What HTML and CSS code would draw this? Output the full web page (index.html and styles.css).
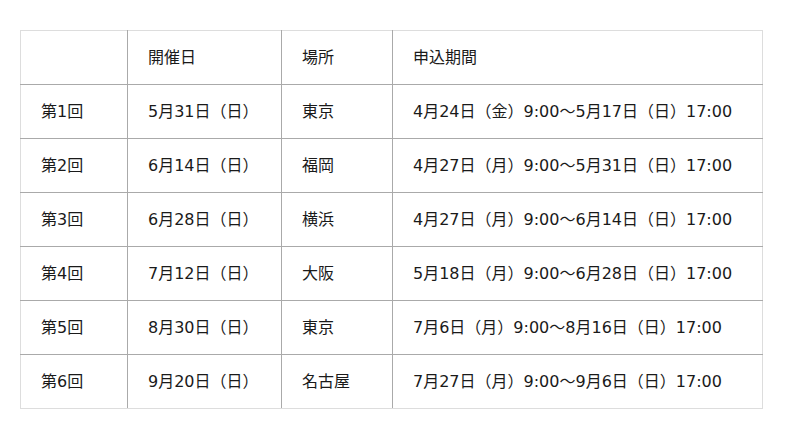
FILE: index.html
```html
<!DOCTYPE html>
<html lang="ja">
<head>
<meta charset="utf-8">
<link rel="stylesheet" href="styles.css">
</head>
<body>
<div class="wrap">
<table class="schedule">
  <colgroup>
    <col class="c1"><col class="c2"><col class="c3"><col class="c4">
  </colgroup>
  <tr><td></td><td>開催日</td><td>場所</td><td>申込期間</td></tr>
  <tr><td>第1回</td><td>5月31日（日）</td><td>東京</td><td>4月24日（金）9:00〜5月17日（日）17:00</td></tr>
  <tr><td>第2回</td><td>6月14日（日）</td><td>福岡</td><td>4月27日（月）9:00〜5月31日（日）17:00</td></tr>
  <tr><td>第3回</td><td>6月28日（日）</td><td>横浜</td><td>4月27日（月）9:00〜6月14日（日）17:00</td></tr>
  <tr><td>第4回</td><td>7月12日（日）</td><td>大阪</td><td>5月18日（月）9:00〜6月28日（日）17:00</td></tr>
  <tr><td>第5回</td><td>8月30日（日）</td><td>東京</td><td>7月6日（月）9:00〜8月16日（日）17:00</td></tr>
  <tr><td>第6回</td><td>9月20日（日）</td><td>名古屋</td><td>7月27日（月）9:00〜9月6日（日）17:00</td></tr>
</table>
</div>
</body>
</html>
```
FILE: styles.css
```css
html, body {
  margin: 0;
  padding: 0;
  background: #fff;
}
.wrap {
  padding: 30px 20px;
}
.schedule {
  width: 742px;
  border-collapse: collapse;
  table-layout: fixed;
  font-family: "DejaVu Sans", "Noto Sans CJK JP", sans-serif;
  font-size: 16px;
  color: #1a1a1a;
}
.c1 { width: 107px; }
.c2 { width: 154px; }
.c3 { width: 111px; }
.c4 { width: 370px; }
.schedule td {
  border: 1px solid #aaa;
  padding: 15px 20px;
  line-height: 23px;
  white-space: nowrap;
  text-align: left;
}
.schedule tr:first-child td { border-top-color: #ddd; }
.schedule tr:last-child td { border-bottom-color: #ddd; }
.schedule td:first-child { border-left-color: #ddd; }
.schedule td:last-child { border-right-color: #ddd; }
```
